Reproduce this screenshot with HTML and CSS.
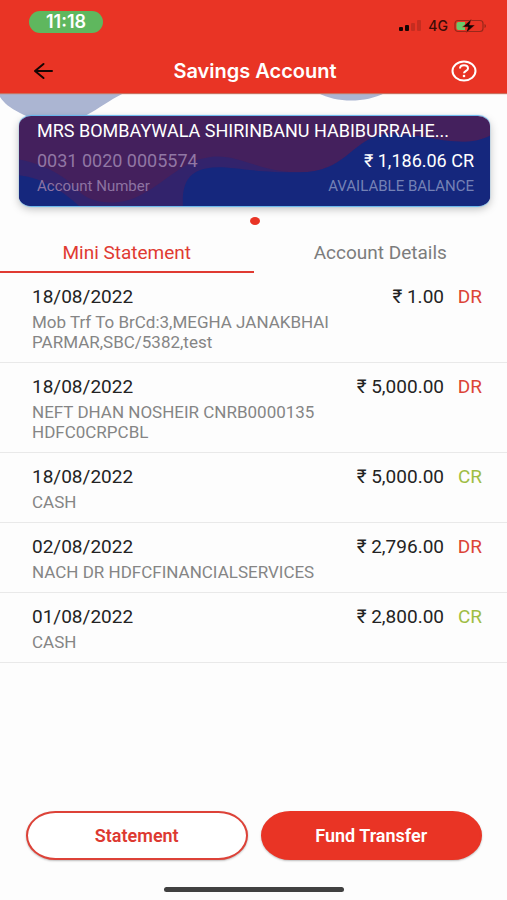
FILE: index.html
```html
<!DOCTYPE html>
<html lang="en">
<head>
<meta charset="utf-8">
<meta name="viewport" content="width=device-width, initial-scale=1">
<title>Savings Account</title>
<link rel="stylesheet" href="styles.css">
</head>
<body>
<header class="header">
  <div class="status">
    <span class="time">11:18</span>
    <div class="signals">
      <svg class="bars" width="23" height="12" viewBox="0 0 23 12" aria-hidden="true">
        <rect x="0" y="7" width="4" height="4" rx="1" fill="#160503"/>
        <rect x="6" y="5" width="4" height="6" rx="1" fill="#160503"/>
        <rect x="12" y="3" width="4" height="8" rx="1" fill="#c52d20"/>
        <rect x="18" y="0" width="4" height="11" rx="1" fill="#c52d20"/>
      </svg>
      <span class="network">4G</span>
      <svg width="33" height="14" viewBox="0 0 33 14" aria-hidden="true">
        <rect x="1" y="1.5" width="28" height="11" rx="3" fill="none" stroke="#98281b" stroke-width="1.2"/>
        <path d="M4.500 3H11V11H4.500Q2.500 11 2.500 9V5Q2.500 3 4.500 3Z" fill="#69c96b"/>
        <path d="M30.500 5V9Q32 8.500 32 7Q32 5.500 30.500 5Z" fill="#98281b"/>
        <path d="M17.500 0L8.500 8H14L12 14L21 6H15.500Z" fill="#100504" stroke="#e93425" stroke-width=".5"/>
      </svg>
    </div>
  </div>
  <nav class="navbar">
    <button class="icon-button" type="button" aria-label="Back">
      <svg width="20" height="18" viewBox="0 0 20 18" fill="none" stroke="#160503" stroke-width="2" stroke-linecap="round" stroke-linejoin="round"><path d="M19 9H2M10.500 2L2 9L10.500 16"/></svg>
    </button>
    <h1 class="title">Savings Account</h1>
    <button class="icon-button help" type="button" aria-label="Help">
      <svg width="26" height="22" viewBox="0 0 26 22" fill="none" stroke="#fff" stroke-width="2"><ellipse cx="13" cy="11" rx="11.500" ry="9.500"/><path d="M9 8.600C9 6.600 10.700 5.300 13 5.300S17 6.600 17 8.500C17 10.800 13 10.800 13 13.300"/><ellipse cx="13" cy="16" rx="1.300" ry="1.200" fill="#fff" stroke="none"/></svg>
    </button>
  </nav>
</header>
<main class="main">
  <section class="hero">
    <svg class="backdrop" viewBox="0 0 507 30" preserveAspectRatio="none" aria-hidden="true">
      <path d="M0 0H124C108 8 100 15 85 23C68 31 35 29 20 20C10 15 4 10 0 4ZM318 0H385C365 10 337 10 318 0Z" fill="#abb5d2"/>
    </svg>
    <article class="card">
      <svg class="card-art" viewBox="0 0 471 91" preserveAspectRatio="none" aria-hidden="true">
        <rect width="471" height="91" fill="#44205d"/>
        <path d="M0 44C28 49 48 63 60 76C72 89 101 92 123 79C142 70 162 48 184 43C215 34 237 57 281 57C325 57 332 27 361 19C392 12 439 37 471 20V91H0Z" fill="#32236c"/>
        <path d="M0 60C25 63 45 77 60 91H0ZM164 91C163 74 166 57 187 53C208 49 224 57 281 57C325 57 332 27 361 19C392 12 439 37 471 20V91Z" fill="#15277d"/>
      </svg>
      <p class="holder">MRS BOMBAYWALA SHIRINBANU HABIBURRAHE...</p>
      <div class="card-row">
        <span class="number">0031 0020 0005574</span>
        <span class="balance">₹ 1,186.06 CR</span>
      </div>
      <div class="card-row caption">
        <span>Account Number</span>
        <span class="available">AVAILABLE BALANCE</span>
      </div>
    </article>
    <div class="dot"></div>
  </section>
  <div class="tabs" role="tablist">
    <button class="tab active" type="button" role="tab" aria-selected="true">Mini Statement</button>
    <button class="tab" type="button" role="tab" aria-selected="false">Account Details</button>
  </div>
  <ul class="transactions">
    <li class="transaction">
      <div class="details"><time>18/08/2022</time><p>Mob Trf To BrCd:3,MEGHA JANAKBHAI PARMAR,SBC/5382,test</p></div>
      <span class="amount">₹ 1.00</span><span class="kind debit">DR</span>
    </li>
    <li class="transaction">
      <div class="details"><time>18/08/2022</time><p>NEFT DHAN NOSHEIR CNRB0000135 HDFC0CRPCBL</p></div>
      <span class="amount">₹ 5,000.00</span><span class="kind debit">DR</span>
    </li>
    <li class="transaction">
      <div class="details"><time>18/08/2022</time><p>CASH</p></div>
      <span class="amount">₹ 5,000.00</span><span class="kind credit">CR</span>
    </li>
    <li class="transaction">
      <div class="details"><time>02/08/2022</time><p>NACH DR HDFCFINANCIALSERVICES</p></div>
      <span class="amount">₹ 2,796.00</span><span class="kind debit">DR</span>
    </li>
    <li class="transaction">
      <div class="details"><time>01/08/2022</time><p>CASH</p></div>
      <span class="amount">₹ 2,800.00</span><span class="kind credit">CR</span>
    </li>
  </ul>
</main>
<footer class="footer">
  <div class="actions">
    <button class="action" type="button">Statement</button>
    <button class="action primary" type="button">Fund Transfer</button>
  </div>
  <div class="home-bar"></div>
</footer>
</body>
</html>
```
FILE: styles.css
```css
* { box-sizing: border-box; }

body {
  margin: 0;
  min-height: 100vh;
  display: flex;
  flex-direction: column;
  background: #fdfdfd;
  color: #232323;
  font-family: Roboto, "Liberation Sans", sans-serif;
  font-size: 19px;
}

p, h1, ul { margin: 0; padding: 0; }
button { font: inherit; border: 0; padding: 0; background: none; }

.header {
  position: relative;
  z-index: 1;
  background: #e93425;
  box-shadow: 0 1px 1px #c9705f;
}
.status {
  height: 49px;
  padding: 11px 20px 0 29px;
  display: flex;
  justify-content: space-between;
  align-items: flex-start;
}
.time {
  width: 74px;
  height: 22px;
  border-radius: 11px;
  background: #5fb75e;
  color: #fff;
  font: 600 18px/22px Inter, sans-serif;
  text-align: center;
}
.signals {
  display: flex;
  align-items: center;
  gap: 6px;
  padding-top: 7px;
}
.network { font: 500 14px/16px Inter, sans-serif; color: #3a0c07; }
.navbar {
  height: 44px;
  padding: 0 30px 0 33px;
  display: grid;
  grid-template-columns: 1fr auto 1fr;
  align-items: center;
}
.icon-button { display: flex; }
.help { justify-self: end; }
.title { color: #fff; font: 600 20px/24px Inter, sans-serif; }

.hero { position: relative; padding: 23px 17px 12px 19px; }
.backdrop { position: absolute; top: 0; left: 0; width: 100%; height: 30px; }
.card {
  position: relative;
  height: 90px;
  padding: 3px 16px 0 18px;
  border-radius: 12px / 10px;
  overflow: hidden;
  color: #fff;
  box-shadow: 0 -1px 1px #62b5ee, 0 1px 1px #62b5ee, 0 3px 8px #00000040;
}
.card-art { position: absolute; top: 0; left: 0; width: 100%; height: 100%; }
.holder, .card-row { position: relative; }
.holder { font-size: 18px; line-height: 24px; white-space: nowrap; }
.card-row {
  display: flex;
  justify-content: space-between;
  align-items: center;
  line-height: 24px;
  padding-top: 6px;
}
.number { font-size: 18px; color: #9177a4; }
.balance { font-size: 18px; }
.caption { font-size: 15px; padding-top: 1px; color: #8d73a2; }
.available { color: #7481b5; }
.dot {
  width: 10px;
  height: 8px;
  margin: 11px auto 0;
  border-radius: 50%;
  background: #e93425;
}

.tabs { display: grid; grid-template-columns: 1fr 1fr; }
.tab {
  height: 36px;
  padding-bottom: 4px;
  border-bottom: 2px solid transparent;
  color: #7c7c7c;
}
.tab.active { color: #e03a32; border-color: #e03a32; }

.transactions { list-style: none; }
.transaction {
  display: flex;
  padding: 12px 25px 10px 32px;
  border-bottom: 1px solid #e9e9e9;
  line-height: 24px;
}
.details { flex: 1; }
.details time { display: block; }
.details p {
  max-width: 304px;
  margin-top: 3px;
  color: #858585;
  font-size: 17px;
  line-height: 20px;
}
.kind { width: 38px; text-align: right; }
.debit { color: #dc4436; }
.credit { color: #9fbd43; }

.footer {
  margin-top: auto;
  padding: 20px 25px 8px 26px;
}
.actions { display: grid; grid-template-columns: 1fr 1fr; gap: 13px; }
.action {
  height: 49px;
  border: 2px solid #dd4238;
  border-radius: 30px / 25px;
  background: #fff;
  color: #dd3931;
  font-size: 18px;
  font-weight: 600;
  box-shadow: 0 1px 2px #00000040;
}
.action.primary { background: #e93425; border-color: #e93425; color: #fff; }
.home-bar {
  width: 180px;
  height: 5px;
  margin: 27px auto 0;
  border-radius: 3px;
  background: #414141;
}
```
